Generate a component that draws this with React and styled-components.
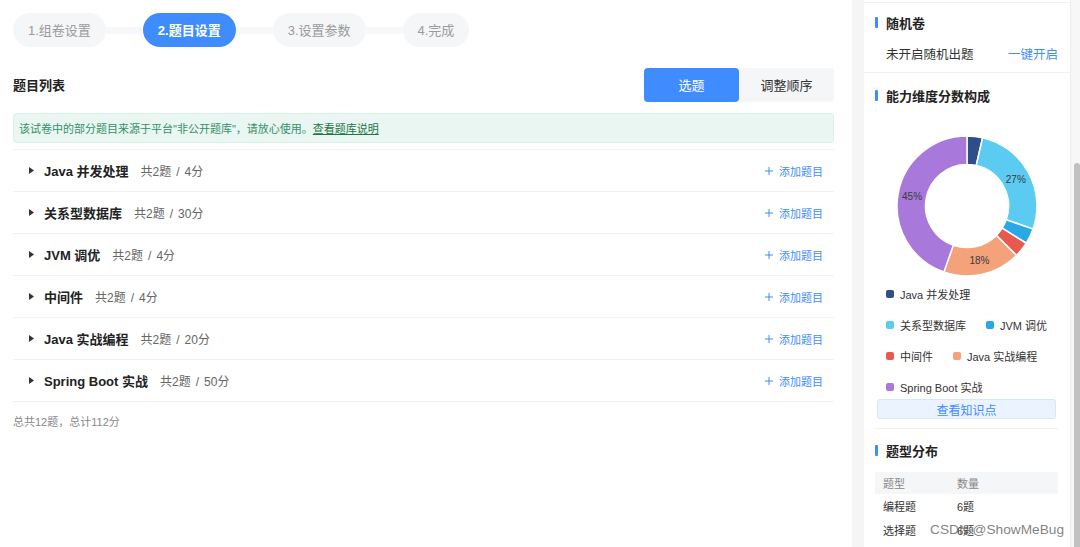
import React from "react";
import styled, { createGlobalStyle } from "styled-components";

const GlobalStyle = createGlobalStyle`
  html, body { margin: 0; padding: 0; }
  body {
    background: #f5f5f5;
    font-family: "Liberation Sans", "Noto Sans CJK SC", sans-serif;
    color: #333;
  }
  * { box-sizing: border-box; }
`;

const Page = styled.div`
  position: relative;
  display: flex;
  width: 1080px;
  height: 547px;
  overflow: hidden;
`;

const Main = styled.main`
  flex: none;
  width: 852px;
  background: #fff;
  padding: 13px 18px 0 13px;
`;

const Steps = styled.div`
  display: flex;
  align-items: center;
  height: 34px;
`;

const Step = styled.div`
  height: 34px;
  padding: 0 15px 2px;
  border-radius: 17px;
  display: flex;
  align-items: center;
  font-size: 13px;
  white-space: nowrap;
  background: ${(p) => (p.$active ? "#3f8cff" : "#f5f6f8")};
  color: ${(p) => (p.$active ? "#fff" : "#9b9b9b")};
  font-weight: ${(p) => (p.$active ? 700 : 400)};
`;

const Connector = styled.div`
  width: 37px;
  height: 7px;
  background: #f7f8fa;
`;

const ListHeader = styled.div`
  margin-top: 21px;
  height: 34px;
  display: flex;
  align-items: center;
  justify-content: space-between;
`;

const ListTitle = styled.h2`
  margin: 0 0 2px;
  font-size: 13px;
  font-weight: 700;
  color: #222;
`;

const Segmented = styled.div`
  display: flex;
  background: #f5f6f8;
  border-radius: 4px;
`;

const SegButton = styled.button`
  width: 95px;
  height: 34px;
  border: 0;
  border-radius: 4px;
  padding: 0 0 2px;
  font: inherit;
  font-size: 13px;
  cursor: pointer;
  background: ${(p) => (p.$active ? "#3f8cff" : "transparent")};
  color: ${(p) => (p.$active ? "#fff" : "#333")};
`;

const Notice = styled.div`
  margin-top: 11px;
  height: 30px;
  padding: 0 5px;
  display: flex;
  align-items: center;
  background: #e9f6f1;
  border: 1px solid #d9f0e6;
  border-radius: 4px;
  font-size: 11px;
  color: #34916a;
`;

const NoticeLink = styled.a`
  color: #1d7747;
  text-decoration: underline;
`;

const List = styled.ul`
  list-style: none;
  margin: 6px 0 0;
  padding: 0;
  border-top: 1px solid #f2f2f2;
`;

const Row = styled.li`
  height: 42px;
  border-bottom: 1px solid #f2f2f2;
  display: flex;
  align-items: center;
  padding: 0 11px 0 16px;
`;

const Caret = styled.svg`
  width: 5px;
  height: 7px;
  margin-right: 10px;
  flex: none;
`;

const RowTitle = styled.span`
  font-size: 13px;
  font-weight: 700;
  color: #222;
`;

const RowStats = styled.span`
  margin-left: 12px;
  font-size: 12px;
  color: #666;
`;

const Slash = styled.span`
  margin: 0 5px;
`;

const AddButton = styled.button`
  margin-left: auto;
  display: flex;
  align-items: center;
  gap: 6px;
  border: 0;
  background: none;
  padding: 0;
  font: inherit;
  font-size: 11px;
  color: #3f8cff;
  cursor: pointer;
`;

const Summary = styled.div`
  margin-top: 11px;
  font-size: 11px;
  color: #888;
`;

const Gap = styled.div`
  flex: none;
  width: 12px;
`;

const Side = styled.aside`
  flex: none;
  width: 206px;
  background: #fff;
  padding-top: 2px;
  display: flex;
  flex-direction: column;
`;

const Section = styled.section`
  padding: ${(p) => p.$pt}px 12px ${(p) => p.$pb || 0}px 11px;
  border-top: ${(p) => (p.$topLine ? "1px solid #f0f0f0" : "0")};
  border-bottom: ${(p) => (p.$bottomLine ? "1px solid #f0f0f0" : "0")};
`;

const SectionTitle = styled.h3`
  margin: 0;
  height: 20px;
  display: flex;
  align-items: center;
  gap: 8px;
  font-size: 13px;
  font-weight: 700;
  color: #222;
  &::before {
    content: "";
    width: 3px;
    height: 11px;
    border-radius: 1px;
    background: #3f8cff;
  }
`;

const RandomRow = styled.div`
  margin-top: 11px;
  height: 20px;
  padding-left: 11px;
  display: flex;
  align-items: center;
  justify-content: space-between;
  font-size: 12.5px;
  color: #333;
`;

const LinkButton = styled.a`
  color: #3f8cff;
  cursor: pointer;
`;

const ChartBox = styled.div`
  margin-top: 30px;
  display: flex;
  justify-content: center;
`;

const Legend = styled.div`
  margin-top: 9px;
  padding-left: 11px;
  display: flex;
  flex-direction: column;
  gap: 15px;
`;

const LegendRow = styled.div`
  display: flex;
  gap: 20px;
  height: 16px;
`;

const LegendItem = styled.div`
  display: flex;
  align-items: center;
  gap: 6px;
  font-size: 11px;
  color: #333;
  white-space: nowrap;
`;

const Swatch = styled.span`
  width: 8px;
  height: 8px;
  border-radius: 2px;
  background: ${(p) => p.$color};
`;

const KnowledgeButton = styled.button`
  display: block;
  width: calc(100% - 4px);
  margin: 4px 2px 0;
  height: 20px;
  padding: 0;
  border: 1px solid #d6e6fd;
  border-radius: 3px;
  background: #eaf3ff;
  font: inherit;
  font-size: 12px;
  color: #3f8cff;
  cursor: pointer;
`;

const Rule = styled.div`
  margin-top: 9px;
  height: 1px;
  background: #f0f0f0;
`;

const Table = styled.div`
  margin-top: 12px;
  font-size: 11px;
`;

const TRow = styled.div`
  display: grid;
  grid-template-columns: 74px 1fr;
  align-items: center;
  height: ${(p) => (p.$head ? 22 : 24)}px;
  background: ${(p) => (p.$head ? "#f5f6f8" : "transparent")};
  color: ${(p) => (p.$head ? "#888" : "#333")};
`;

const TCell = styled.span`
  padding-left: 8px;
`;

const Scroll = styled.div`
  flex: none;
  width: 10px;
  background: #f7f7f7;
  border-left: 1px solid #ececec;
  padding-top: 163px;
  display: flex;
  flex-direction: column;
  align-items: flex-end;
`;

const Thumb = styled.div`
  flex: 1;
  width: 6px;
  border-radius: 3px 3px 0 0;
  background: #c1c1c1;
`;

const Watermark = styled.div`
  position: absolute;
  left: 930px;
  top: 522px;
  font-family: "Liberation Sans", sans-serif;
  font-size: 13.7px;
  line-height: 16px;
  color: rgba(95, 95, 95, 0.8);
  pointer-events: none;
`;

const steps = ["1.组卷设置", "2.题目设置", "3.设置参数", "4.完成"];

const topics = [
  { name: "Java 并发处理", count: 2, score: 4, color: "#2e4d8b" },
  { name: "关系型数据库", count: 2, score: 30, color: "#5ccbf2" },
  { name: "JVM 调优", count: 2, score: 4, color: "#28a8e6" },
  { name: "中间件", count: 2, score: 4, color: "#e85a4f" },
  { name: "Java 实战编程", count: 2, score: 20, color: "#f3a27a" },
  { name: "Spring Boot 实战", count: 2, score: 50, color: "#a978db" },
];

const legendRows = [[0], [1, 2], [3, 4], [5]];

function Donut() {
  const size = 142;
  const c = size / 2;
  const r1 = 70;
  const r0 = 41.5;
  const total = topics.reduce((s, t) => s + t.score, 0);
  const pt = (r, a) => [c + r * Math.sin(a), c - r * Math.cos(a)];
  let acc = 0;
  const segs = topics.map((t) => {
    const a0 = (acc / total) * Math.PI * 2;
    acc += t.score;
    const a1 = (acc / total) * Math.PI * 2;
    const large = a1 - a0 > Math.PI ? 1 : 0;
    const [x0, y0] = pt(r1, a0);
    const [x1, y1] = pt(r1, a1);
    const [x2, y2] = pt(r0, a1);
    const [x3, y3] = pt(r0, a0);
    const d = `M${x0},${y0} A${r1},${r1} 0 ${large} 1 ${x1},${y1} L${x2},${y2} A${r0},${r0} 0 ${large} 0 ${x3},${y3} Z`;
    const pct = Math.round((t.score / total) * 100);
    const [lx, ly] = pt((r0 + r1) / 2, (a0 + a1) / 2);
    return { d, color: t.color, pct, lx, ly };
  });
  return (
    <svg width={size} height={size} viewBox={`0 0 ${size} ${size}`}>
      {segs.map((s, i) => (
        <path key={i} d={s.d} fill={s.color} stroke="#fff" strokeWidth="1.5" strokeLinejoin="round" />
      ))}
      {segs
        .filter((s) => s.pct >= 10)
        .map((s, i) => (
          <text
            key={i}
            x={s.lx}
            y={s.ly}
            fontSize="10"
            fill="#3a3a3a"
            textAnchor="middle"
            dominantBaseline="central"
            fontFamily="Liberation Sans, sans-serif"
          >
            {s.pct}%
          </text>
        ))}
    </svg>
  );
}

export default function App() {
  return (
    <>
      <GlobalStyle />
      <Page>
        <Main>
          <Steps>
            {steps.map((s, i) => (
              <React.Fragment key={s}>
                {i > 0 && <Connector />}
                <Step $active={i === 1}>{s}</Step>
              </React.Fragment>
            ))}
          </Steps>

          <ListHeader>
            <ListTitle>题目列表</ListTitle>
            <Segmented>
              <SegButton $active>选题</SegButton>
              <SegButton>调整顺序</SegButton>
            </Segmented>
          </ListHeader>

          <Notice>
            该试卷中的部分题目来源于平台"非公开题库"，请放心使用。
            <NoticeLink>查看题库说明</NoticeLink>
          </Notice>

          <List>
            {topics.map((t) => (
              <Row key={t.name}>
                <Caret viewBox="0 0 5 7">
                  <path d="M0 0 L5 3.5 L0 7 Z" fill="#333" />
                </Caret>
                <RowTitle>{t.name}</RowTitle>
                <RowStats>
                  共{t.count}题<Slash>/</Slash>
                  {t.score}分
                </RowStats>
                <AddButton>
                  <svg width="8" height="8" viewBox="0 0 8 8">
                    <path d="M4 0 V8 M0 4 H8" stroke="#3f8cff" strokeWidth="1" />
                  </svg>
                  添加题目
                </AddButton>
              </Row>
            ))}
          </List>

          <Summary>总共12题，总计112分</Summary>
        </Main>

        <Gap />

        <Side>
          <Section $pt={9} $pb={9} $topLine $bottomLine>
            <SectionTitle>随机卷</SectionTitle>
            <RandomRow>
              <span>未开启随机出题</span>
              <LinkButton>一键开启</LinkButton>
            </RandomRow>
          </Section>

          <Section $pt={12}>
            <SectionTitle>能力维度分数构成</SectionTitle>
            <ChartBox>
              <Donut />
            </ChartBox>
            <Legend>
              {legendRows.map((row, ri) => (
                <LegendRow key={ri}>
                  {row.map((idx) => (
                    <LegendItem key={idx}>
                      <Swatch $color={topics[idx].color} />
                      {topics[idx].name}
                    </LegendItem>
                  ))}
                </LegendRow>
              ))}
            </Legend>
            <KnowledgeButton>查看知识点</KnowledgeButton>
            <Rule />
          </Section>

          <Section $pt={11}>
            <SectionTitle>题型分布</SectionTitle>
            <Table>
              <TRow $head>
                <TCell>题型</TCell>
                <TCell>数量</TCell>
              </TRow>
              <TRow>
                <TCell>编程题</TCell>
                <TCell>6题</TCell>
              </TRow>
              <TRow>
                <TCell>选择题</TCell>
                <TCell>6题</TCell>
              </TRow>
            </Table>
          </Section>
        </Side>

        <Scroll>
          <Thumb />
        </Scroll>

        <Watermark>CSDN @ShowMeBug</Watermark>
      </Page>
    </>
  );
}
